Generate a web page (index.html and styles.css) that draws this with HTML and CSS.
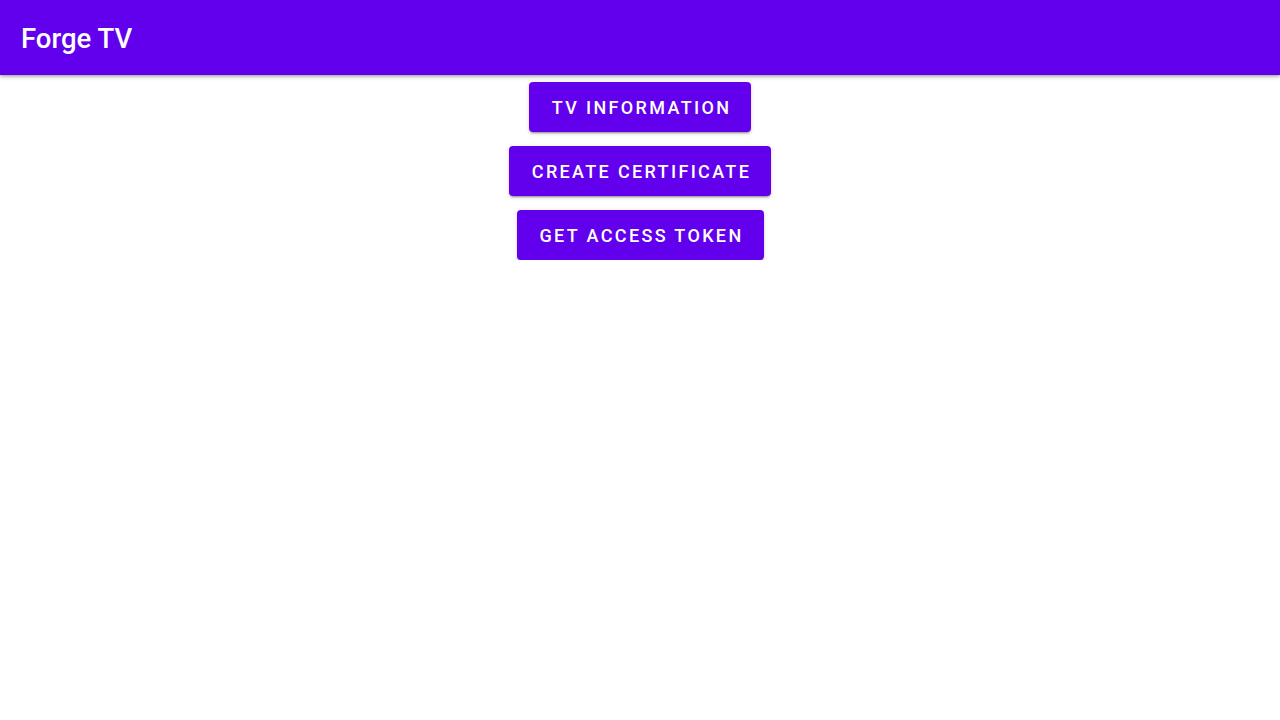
FILE: index.html
```html
<!DOCTYPE html>
<html>
<head>
<meta charset="utf-8">
<link rel="stylesheet" href="styles.css">
</head>
<body>
<header class="appbar"><h1 class="title">Forge TV</h1></header>
<main class="actions">
  <button class="btn">TV Information</button>
  <button class="btn">Create Certificate</button>
  <button class="btn">Get Access Token</button>
</main>
</body>
</html>
```
FILE: styles.css
```css
html, body { margin: 0; padding: 0; background: #fff; }
body { font-family: Roboto, "Noto Sans", sans-serif; }
.appbar {
  height: 75px;
  box-sizing: border-box;
  background: #6200ee;
  display: flex;
  align-items: center;
  padding: 2px 0 0 21px;
  box-shadow: 0 2px 4px rgba(0,0,0,0.25), 0 1px 2px rgba(0,0,0,0.15);
  position: relative;
  z-index: 1;
}
.title {
  margin: 0;
  color: #fff;
  font-size: 27.5px;
  font-weight: 500;
  letter-spacing: 0;
}
.actions {
  display: flex;
  flex-direction: column;
  align-items: center;
  gap: 14px;
  padding-top: 7px;
}
.btn {
  height: 50px;
  padding: 0 20px 0 23px;
  border: none;
  border-radius: 4px;
  background: #6200ee;
  color: #fff;
  font-family: Roboto, sans-serif;
  font-size: 18px;
  font-weight: 500;
  letter-spacing: 2.35px;
  text-transform: uppercase;
  box-shadow: 0 3px 1px -2px rgba(0,0,0,0.2), 0 2px 2px 0 rgba(0,0,0,0.14), 0 1px 5px 0 rgba(0,0,0,0.12);
}
```
